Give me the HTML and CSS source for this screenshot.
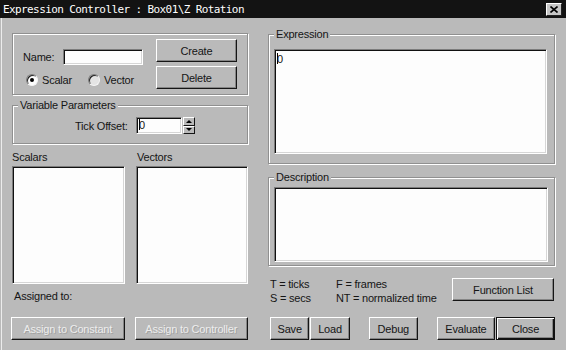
FILE: index.html
```html
<!DOCTYPE html>
<html lang="en">
<head>
  <meta charset="UTF-8">
  <title>Expression Controller</title>
  <link rel="stylesheet" href="styles.css">
</head>
<body>
  <div class="window">
    <div class="titlebar">
      <span class="title">Expression Controller : Box01\Z Rotation</span>
      <span class="close-box">
        <svg width="8" height="7" viewBox="0 0 8 7"><path d="M0.5 0.5L7.5 6.5M7.5 0.5L0.5 6.5" stroke="#000" stroke-width="1.6"/></svg>
      </span>
    </div>

    <div class="main">
      <!-- left side: variables -->
      <div class="left">
        <div class="group name-group">
          <div class="name-fields">
            <div class="name-row">
              <label>Name:</label>
              <span class="field name-input"></span>
            </div>
            <div class="radio-row">
              <span class="radio checked"></span><span class="radio-text">Scalar</span>
              <span class="radio vector"></span><span class="radio-text">Vector</span>
            </div>
          </div>
          <div class="name-buttons">
            <button class="btn side-btn">Create</button>
            <button class="btn side-btn">Delete</button>
          </div>
        </div>

        <fieldset class="group params">
          <legend>Variable Parameters</legend>
          <div class="tick-row">
            <span class="tick-label">Tick Offset:</span>
            <span class="field tick-input"><i class="caret"></i>0</span>
            <span class="spinner">
              <span class="spin"><i class="arrow-up"></i></span>
              <span class="spin"><i class="arrow-down"></i></span>
            </span>
          </div>
        </fieldset>

        <div class="lists">
          <div>
            <div class="list-label">Scalars</div>
            <div class="field listbox"></div>
          </div>
          <div>
            <div class="list-label vectors">Vectors</div>
            <div class="field listbox"></div>
          </div>
        </div>

        <div class="assigned">Assigned to:</div>

        <div class="assign-buttons">
          <button class="btn assign-btn disabled">Assign to Constant</button>
          <button class="btn assign-btn disabled">Assign to Controller</button>
        </div>
      </div>

      <!-- right side: expression -->
      <div class="right">
        <fieldset class="group expr">
          <legend>Expression</legend>
          <div class="field textbox expr-box"><i class="caret"></i>0</div>
        </fieldset>

        <fieldset class="group desc">
          <legend>Description</legend>
          <div class="field textbox desc-box"></div>
        </fieldset>

        <div class="help-row">
          <div class="legend-grid">
            <span>T = ticks</span><span>F = frames</span>
            <span>S = secs</span><span>NT = normalized time</span>
          </div>
          <button class="btn func-btn">Function List</button>
        </div>

        <div class="action-row">
          <button class="btn save-btn">Save</button>
          <button class="btn load-btn">Load</button>
          <button class="btn debug-btn">Debug</button>
          <button class="btn eval-btn">Evaluate</button>
          <button class="btn close-btn">Close</button>
        </div>
      </div>
    </div>
  </div>
</body>
</html>
```

FILE: styles.css
```css
* {
  margin: 0;
  padding: 0;
  box-sizing: border-box;
}
body {
  background-color: #bababa;
  font-family: "Liberation Sans", Arial, sans-serif;
  font-size: 11px;
  letter-spacing: -0.2px;
  color: #151515;
}
.window {
  width: 566px;
  height: 350px;
  background-color: #bababa;
  overflow: hidden;
}

/* title bar */
.titlebar {
  height: 18px;
  background-color: #131313;
  display: flex;
  align-items: center;
  justify-content: space-between;
  padding: 0 4px 0 3px;
}
.title {
  color: #fff;
  font-family: "DejaVu Sans Mono", monospace;
  font-size: 11px;
  letter-spacing: -0.6px;
  white-space: pre;
}
.close-box {
  width: 16px;
  height: 13px;
  background-color: #c6c6c6;
  border: 1px solid;
  border-color: #fff #222 #222 #fff;
  display: flex;
  align-items: center;
  justify-content: center;
}

/* layout */
.main {
  display: flex;
  height: 332px;
  padding: 10px 0 0 12px;
  box-shadow: inset 1px 0 0 #bababa, inset 2px 0 0 #ececec;
}
.left {
  width: 236px;
  padding-top: 5px;
}
.right {
  width: 287px;
  margin-left: 20px;
}

/* etched group boxes */
.group {
  border: 1px solid #909090;
  box-shadow: inset 1px 1px 0 #fff, 1px 1px 0 #fff;
  min-width: 0;
}
legend {
  padding: 0 2px;
  line-height: 12px;
  background-color: #bababa;
}

/* sunken fields */
.field {
  display: block;
  background-color: #fdfdfd;
  border: 1px solid;
  border-color: #7c7c7c #fff #fff #7c7c7c;
  box-shadow: inset 1px 1px 0 #111, inset -1px -1px 0 #d6d6d6;
}
.caret {
  display: inline-block;
  width: 1px;
  height: 11px;
  background-color: #000;
  vertical-align: -1px;
  margin-right: -1px;
}

/* raised buttons */
.btn {
  display: block;
  height: 23px;
  background-color: #bababa;
  border: 1px solid;
  border-color: #fff #151515 #151515 #fff;
  box-shadow: inset -1px -1px 0 #858585;
  font-family: inherit;
  font-size: 11px;
  letter-spacing: -0.2px;
  color: #151515;
  cursor: pointer;
}
.btn.disabled {
  color: #ededed;
  text-shadow: 1px 1px 0 #a2a2a2;
}

/* name group */
.name-group {
  display: flex;
  height: 62px;
  padding: 5px 10px 0 10px;
}
.name-fields {
  padding-top: 10px;
}
.name-row {
  display: flex;
  align-items: center;
  height: 16px;
}
.name-row label {
  width: 40px;
}
.name-input {
  width: 80px;
  height: 16px;
}
.radio-row {
  display: flex;
  align-items: center;
  height: 14px;
  margin-top: 8px;
  padding-left: 3px;
}
.radio {
  position: relative;
  width: 12px;
  height: 12px;
  border-radius: 50%;
  background-color: #fdfdfd;
  border: 1px solid;
  border-color: #7c7c7c #f4f4f4 #f4f4f4 #7c7c7c;
  box-shadow: inset 1px 1px 0 #222;
}
.radio.checked::after {
  content: "";
  position: absolute;
  left: 3px;
  top: 3px;
  width: 4px;
  height: 4px;
  border-radius: 50%;
  background-color: #000;
}
.radio.vector {
  margin-left: 16px;
  background-color: #e4e4e4;
}
.radio-text {
  margin-left: 4px;
}
.name-buttons {
  margin-left: auto;
  display: flex;
  flex-direction: column;
  gap: 4px;
}
.side-btn {
  width: 81px;
}

/* variable parameters */
.params {
  margin-top: 4px;
  padding: 6px 5px 9px 5px;
}
.tick-row {
  display: flex;
  align-items: center;
  height: 17px;
  margin-left: 57px;
}
.tick-label {
  width: 61px;
}
.tick-input {
  width: 46px;
  height: 17px;
  line-height: 14px;
  padding-left: 2px;
}
.spinner {
  display: flex;
  flex-direction: column;
  width: 12px;
  height: 17px;
  margin-left: 1px;
}
.spin {
  flex: 1;
  display: flex;
  align-items: center;
  justify-content: center;
  background-color: #bababa;
  border: 1px solid;
  border-color: #fff #151515 #151515 #fff;
}
.arrow-up, .arrow-down {
  width: 0;
  height: 0;
  border-left: 3px solid transparent;
  border-right: 3px solid transparent;
}
.arrow-up {
  border-bottom: 3px solid #000;
}
.arrow-down {
  border-top: 3px solid #000;
}

/* lists */
.lists {
  display: grid;
  grid-template-columns: 113px 112px;
  column-gap: 11px;
  margin-top: 7px;
}
.list-label {
  height: 12px;
  line-height: 12px;
}
.list-label.vectors {
  padding-left: 1px;
}
.listbox {
  margin-top: 3px;
  height: 118px;
}
.assigned {
  margin-top: 6px;
  line-height: 13px;
  padding-left: 2px;
}
.assign-buttons {
  display: flex;
  gap: 10px;
  margin-top: 14px;
  margin-left: -1px;
}
.assign-btn {
  width: 114px;
}

/* expression side */
.expr {
  padding: 9px 7px 9px 5px;
}
.textbox {
  line-height: 14px;
  padding: 2px 0 0 2px;
}
.expr-box {
  width: 273px;
  height: 105px;
}
.desc {
  margin-top: 7px;
  padding: 4px 6px 3px 5px;
}
.desc-box {
  width: 274px;
  height: 75px;
}
.help-row {
  display: flex;
  align-items: flex-start;
  margin-top: 11px;
}
.legend-grid {
  display: grid;
  grid-template-columns: 66px auto;
  line-height: 14px;
  padding-left: 2px;
}
.func-btn {
  width: 102px;
  margin: 1px 1px 0 auto;
}
.action-row {
  display: flex;
  margin-top: 12px;
}
.save-btn {
  width: 40px;
  margin-left: 2px;
}
.load-btn {
  width: 40px;
  margin-left: 1px;
}
.debug-btn {
  width: 50px;
  margin-left: 19px;
}
.eval-btn {
  width: 59px;
  margin-left: 19px;
}
.close-btn {
  width: 60px;
  margin-left: 1px;
  border-color: #111;
  box-shadow: inset 1px 1px 0 #fff, inset -1px -1px 0 #111, inset -2px -2px 0 #858585;
}
```
